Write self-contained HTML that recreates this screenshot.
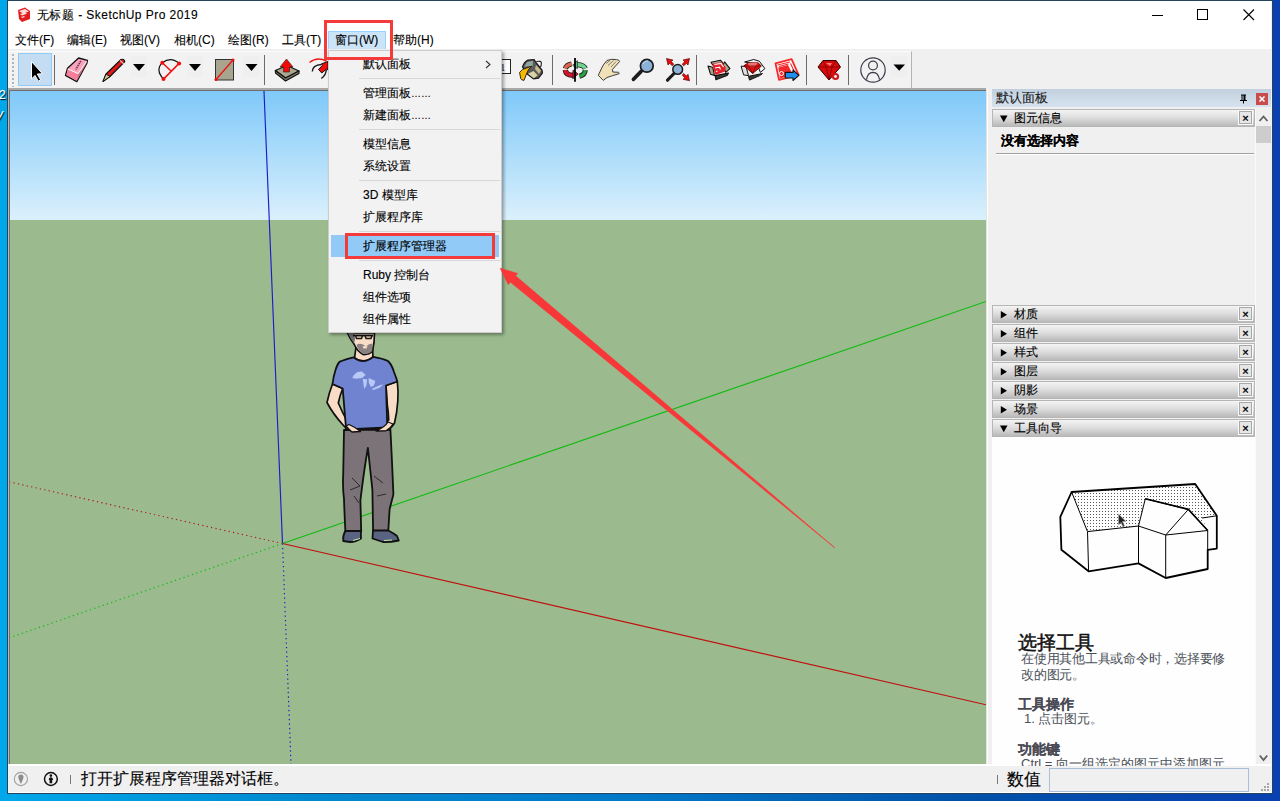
<!DOCTYPE html>
<html><head><meta charset="utf-8">
<style>
*{box-sizing:border-box;margin:0;padding:0}
html,body{width:1280px;height:801px;overflow:hidden}
body{position:relative;font-family:"Liberation Sans",sans-serif;font-size:12px;color:#000;-webkit-text-stroke-width:0.12px;
background:linear-gradient(90deg,#00a8ea 0%,#0088d0 25%,#0078c8 50%,#0052aa 75%,#0a40b0 100%)}
.a{position:absolute}
#win{left:7px;top:0;width:1266px;height:794px;border:1px solid #23435f;background:#f0f0f0}
#title{left:8px;top:1px;width:1263px;height:29px;background:#fff}
#menubar{left:8px;top:30px;width:1263px;height:19px;background:#fff}
.mi{position:absolute;top:32px;height:17px;line-height:17px;font-size:12px;white-space:nowrap}
#tbband{left:8px;top:49px;width:1263px;height:40px;background:#f0f0f0}
#tb{left:8px;top:51px;width:904px;height:37px;background:#f2f2f2;border-top:1px solid #f9fbff;border-right:1px solid #b4b4b4}
.sep{position:absolute;top:55px;width:2px;height:30px;border-left:1px solid #6a6a6a;border-right:1px solid #fff}
#vpframe{left:8px;top:88px;width:978px;height:676px;background:#6e6e6e;border-top:2px solid #a8a8a8;border-left:1px solid #b8b8b8}
#status{left:8px;top:764px;width:1263px;height:29px;background:#f0f0f0;border-top:2px solid #fff;border-bottom:1px solid #fff}
#panel{left:986px;top:89px;width:285px;height:675px;background:#f0f0f0;border-left:1px solid #e4e4e4;box-shadow:inset 1px 0 0 #fff}
.sh{position:absolute;left:992px;width:263px;height:18px;border:1px solid #b6b6b6;
background:linear-gradient(#f4f4f4,#dcdcdc 50%,#b9b9b9);font-size:12px;line-height:16px}
.sh .tri{position:absolute;left:7px;top:4.5px}
.sh .t{position:absolute;left:21px;top:0}
.sh .x{position:absolute;left:246px;top:1px;width:13px;height:13px;border:1px solid #a8a8a8;background:#e6e6e6;box-shadow:0 0 0 1px #fafafa;font-size:11px;line-height:12px;text-align:center;font-weight:normal;-webkit-text-stroke-width:0.4px}
#menu{left:328px;top:50px;width:174px;height:283px;background:#f2f2f2;border:1px solid #cccccc;box-shadow:2px 2px 3px rgba(0,0,0,.35)}
.mr{position:absolute;left:34px;height:22px;line-height:22px;font-size:12px;white-space:nowrap}
.ms{position:absolute;left:30px;width:141px;height:1px;background:#d7d7d7}
</style></head><body>
<div class="a" style="left:-1px;top:88px;font-size:12px;line-height:14px;color:#fff;text-shadow:1px 1px 1px #000">2</div>
<div class="a" style="left:-3px;top:107px;font-size:12px;line-height:14px;color:#fff;text-shadow:1px 1px 1px #000;font-style:italic">y</div>
<div class="a" id="win"></div>
<div class="a" id="title"></div>
<div class="a" style="left:37px;top:7px;font-size:12px;line-height:17px;letter-spacing:0.45px">无标题 - SketchUp Pro 2019</div>
<svg class="a" style="left:0;top:0" width="1280" height="30" viewBox="0 0 1280 30">
<path d="M18 10 L25 7.5 L30 11 L30 19 L22 22 L19 19 Z" fill="#e11d1d"/>
<path d="M19 11 L25 9 L29 11.5 L23 13.5 Z M20 14 L25 12.5 L27 13.8 L22 15.5 Z M21 17 L24 16 L25 17 L22 18 Z" fill="#fff" opacity=".85"/>
<rect x="1152" y="15" width="11" height="1" fill="#000"/>
<rect x="1197.5" y="9.5" width="10" height="10" fill="none" stroke="#000" stroke-width="1"/>
<path d="M1243.5 9.5 L1254 20 M1254 9.5 L1243.5 20" stroke="#000" stroke-width="1.1"/>
</svg>
<div class="a" id="menubar"></div>
<div class="mi" style="left:15px">文件(F)</div>
<div class="mi" style="left:67px">编辑(E)</div>
<div class="mi" style="left:120px">视图(V)</div>
<div class="mi" style="left:174px">相机(C)</div>
<div class="mi" style="left:228px">绘图(R)</div>
<div class="mi" style="left:282px">工具(T)</div>
<div class="a" style="left:328px;top:31px;width:58px;height:19px;background:#cce4f7;border:1px solid #99d1ff"></div>
<div class="mi" style="left:335px">窗口(W)</div>
<div class="mi" style="left:393px">帮助(H)</div>
<div class="a" id="tbband"></div>
<div class="a" id="tb"></div>
<svg class="a" style="left:0;top:49px" width="1280" height="40" viewBox="0 49 1280 40">
<g fill="#b4b4b4"><rect x="12" y="54" width="2" height="2"/><rect x="12" y="58" width="2" height="2"/><rect x="12" y="62" width="2" height="2"/><rect x="12" y="66" width="2" height="2"/><rect x="12" y="70" width="2" height="2"/><rect x="12" y="74" width="2" height="2"/><rect x="12" y="78" width="2" height="2"/><rect x="12" y="82" width="2" height="2"/><rect x="12" y="86" width="2" height="1"/></g>
<rect x="18.5" y="53.5" width="33" height="32" fill="#c4ddf3" stroke="#91c9f7"/>
<path d="M31.5 61.5 L31.5 79 L35 75.5 L38.3 81.2 L40.6 79.8 L37.3 74 L42.5 73.8 Z" fill="#000" stroke="#fff" stroke-width="1" stroke-linejoin="round"/>
<g stroke="#6b6b6b" stroke-width="1"><line x1="54.5" y1="55" x2="54.5" y2="85"/><line x1="264.5" y1="55" x2="264.5" y2="85"/><line x1="552.5" y1="55" x2="552.5" y2="85"/><line x1="696.5" y1="55" x2="696.5" y2="85"/><line x1="806.5" y1="55" x2="806.5" y2="85"/><line x1="848.5" y1="55" x2="848.5" y2="85"/></g>
<!-- eraser -->
<path d="M67.5 68.2 L78.6 58 L87.5 60.3 L86.8 63.5 L76.8 81.6 L65.5 75.4 Z" fill="#f9a3bd" stroke="#111" stroke-width="1.3" stroke-linejoin="round"/>
<path d="M67.8 69 L78.2 73.6 L76.5 80.8 L66.3 75 Z" fill="#f87f9b"/>
<path d="M78.2 73.6 L86.5 62 L86.2 63.8 L77 80.5 Z" fill="#d07088"/>
<path d="M67.8 69 L78.2 73.6 L86.6 61.2" fill="none" stroke="#fff" stroke-width="1"/>
<path d="M80.8 61 L75.8 69.5" stroke="#6a3a48" stroke-width="1.6" stroke-dasharray="1.5 .8"/>
<!-- pencil -->
<path d="M103 81.5 L106 74 L121 59.5 Q124 58.5 124.8 61.5 L110 76.5 Z" fill="#e01818" stroke="#111" stroke-width="1.1" stroke-linejoin="round"/>
<path d="M103 81.5 L106 74 L110 76.5 Z" fill="#d8c890" stroke="#111" stroke-width="1"/>
<path d="M120 60.5 L124 64" stroke="#f0b0b0" stroke-width="1.2"/>
<!-- dropdown arrows -->
<g fill="#efefef"><rect x="131" y="56" width="16" height="21"/><rect x="187" y="56" width="16" height="21"/><rect x="243" y="56" width="16" height="21"/><rect x="891" y="56" width="16" height="21"/></g>
<g fill="#000"><path d="M133 64 L145 64 L139 71 Z"/><path d="M189 64 L201 64 L195 71 Z"/><path d="M245.5 64 L257.5 64 L251.5 71 Z"/><path d="M893.5 64.5 L905 64.5 L899.2 70.8 Z"/></g>
<!-- arc -->
<path d="M163.5 79.1 Q155 70 162.3 62.7 Q171 56 179.1 63.4" fill="none" stroke="#111" stroke-width="1.2"/>
<g stroke="#f01010" stroke-width="1.5"><line x1="162.3" y1="62.7" x2="171" y2="71"/><line x1="179.1" y1="63.4" x2="163.5" y2="79.1"/></g>
<g fill="#f01010"><circle cx="162.3" cy="62.7" r="2"/><circle cx="179.1" cy="63.4" r="2"/><circle cx="163.5" cy="79.1" r="2"/></g>
<!-- rectangle -->
<rect x="215.5" y="59.5" width="18" height="20.5" fill="#a8a58f" stroke="#333" stroke-width="1"/>
<line x1="216" y1="79.5" x2="233" y2="60" stroke="#f01010" stroke-width="1.3"/>
<circle cx="216" cy="79.5" r="1.6" fill="#f01010"/><circle cx="233" cy="60" r="1.6" fill="#f01010"/>
<!-- push pull -->
<path d="M275.3 70.5 L287 65.5 L299 71 L285.5 78 Z" fill="#aaa690" stroke="#111" stroke-width="1.2" stroke-linejoin="round"/>
<path d="M275.3 70.5 L275.5 73 L285.5 81 L299 73.5 L299 71 L285.5 78 Z" fill="#7d7a68" stroke="#111" stroke-width="1.1" stroke-linejoin="round"/>
<path d="M286.5 59 L293 67 L289.5 67 L289.5 72 L283.5 72 L283.5 67 L280 67 Z" fill="#f00a0a" stroke="#222" stroke-width=".6"/>
<!-- follow me partial -->
<path d="M309.5 62.5 Q317 56.5 326.5 61" fill="none" stroke="#f01818" stroke-width="1.4"/>
<path d="M312.3 71.5 Q312.5 65 321.5 64.5" fill="none" stroke="#1a1a1a" stroke-width="1.4"/>
<path d="M321.3 78.5 Q326 75.5 326.3 69.5" fill="none" stroke="#1a1a1a" stroke-width="1.4"/>
<path d="M318.5 69.5 L322.5 65.3 L321.5 63.8 L328 61.5 L328 70 L326.5 69 L321.8 73 Z" fill="#f00a0a" stroke="#111" stroke-width="1" stroke-linejoin="round"/>
<!-- A1 text box -->
<rect x="496.5" y="59.5" width="14" height="14" fill="#fff" stroke="#222" stroke-width="1"/>
<text x="500" y="71" font-family="Liberation Serif" font-size="11" fill="#222">1</text>
<!-- paint bucket -->
<path d="M536.3 61.5 Q541.5 60.5 541.4 63 Q541.5 66 540.3 67" fill="none" stroke="#222" stroke-width="1.1"/>
<path d="M522.5 67 Q524 62 528 60.1 L534.1 59.7 L536.3 63 L542.1 70.2 L542.4 73.1 L538.5 78.2 L533.4 78.9 L526.9 73.8 Z" fill="#5a5a5a" stroke="#1a1a1a" stroke-width="1.2" stroke-linejoin="round"/>
<path d="M524.3 66.6 L527.2 61.9 L533 60.8 L532.7 65.9 Z" fill="#90a8a2"/>
<path d="M536 65 L541 70.5 L539 74 L535 69 Z" fill="#c8bc8c"/>
<path d="M528 73.8 L533.4 70.9 L537.7 75.3 L533.8 78.2 Z" fill="#ddd3a2"/>
<path d="M522.5 69.5 L531.6 66.2 Q528 69 526.9 73.1 L524 80.4 Q521 80 520.7 78.6 L519.6 72.4 Z" fill="#f6b800" stroke="#1a1a1a" stroke-width=".9" stroke-linejoin="round"/>
<!-- orbit -->
<g fill="none" stroke-linecap="butt">
<path d="M565.3 68.5 Q566.5 64.8 571.5 64" stroke="#222" stroke-width="5.2"/>
<path d="M565.3 68.5 Q566.5 64.8 571.5 64" stroke="#e0644c" stroke-width="3.4"/>
<path d="M585.2 68.5 Q584 65 577 64.6" stroke="#222" stroke-width="5.4"/>
<path d="M585.2 68.5 Q584 65 577 64.6" stroke="#72d292" stroke-width="3.6"/>
<path d="M565.3 70 Q566 75.5 573.5 75.2" stroke="#222" stroke-width="5.4"/>
<path d="M565.3 70 Q566 75.5 573.5 75.2" stroke="#d8142a" stroke-width="3.6"/>
<path d="M585.3 70 Q585 75 579.5 76.2" stroke="#222" stroke-width="5"/>
<path d="M585.3 70 Q585 75 579.5 76.2" stroke="#2aa244" stroke-width="3.2"/>
</g>
<path d="M573 70 L578.2 74 L572.8 78.8 Z" fill="#d8142a" stroke="#222" stroke-width=".8" stroke-linejoin="round"/>
<path d="M577.3 60.6 L572.6 65.3 L577.3 68.6 Z" fill="#72d292" stroke="#222" stroke-width=".8" stroke-linejoin="round"/>
<line x1="575" y1="58" x2="575" y2="81.8" stroke="#000" stroke-width="1.8"/>
<!-- pan hand -->
<path d="M598.3 75.3 L603.3 80.4 L607 77.5 L612.4 75.7 L618.9 73.8 Q620 73 618.5 72.3 L612.8 72 L612.4 69.5 L619.6 61.5 Q619 59.5 616.7 59.7 L611.7 59.3 L607 60.4 L604 64 L602.2 67 Z" fill="#f1e1b9" stroke="#2a2a2a" stroke-width=".9" stroke-linejoin="round"/>
<path d="M606 63.5 L610 60.5 M608 65.5 L613.5 60.5 M611 67 L616 61.5" fill="none" stroke="#555" stroke-width=".7"/>
<!-- zoom -->
<line x1="641" y1="71.5" x2="633.5" y2="79.3" stroke="#1c1c1c" stroke-width="3.8" stroke-linecap="round"/>
<circle cx="646.8" cy="65.8" r="6.4" fill="#8db2d8" stroke="#1c1c1c" stroke-width="1.7"/>
<path d="M643 64 Q644.5 61 648 60.8" fill="none" stroke="#b8dcf8" stroke-width="1"/>
<!-- zoom extents -->
<line x1="674" y1="73.5" x2="667.5" y2="80.2" stroke="#1c1c1c" stroke-width="3.2" stroke-linecap="round"/>
<circle cx="677.7" cy="69.4" r="4.9" fill="#8db2d8" stroke="#1c1c1c" stroke-width="1.5"/>
<g fill="#f00a0a" stroke="#300" stroke-width=".6" stroke-linejoin="round"><path d="M666.5 58.5 L673 60 L671.3 61.6 L673.8 64.2 L672.2 65.8 L669.6 63.2 L668 65 Z"/><path d="M689.5 58.5 L688 65 L686.4 63.3 L683.8 65.8 L682.2 64.2 L684.8 61.6 L683 60 Z"/><path d="M689.5 80.8 L683 79.3 L684.7 77.7 L682.2 75.1 L683.8 73.5 L686.4 76.1 L688 74.3 Z"/></g>
<!-- warehouse -->
<g stroke="#111" stroke-width="1.1" stroke-linejoin="round">
<path d="M708 66 L712.7 67.2 L714.5 75.6 L710.5 74.2 Z" fill="#a8a890"/>
<path d="M724.6 61.9 L729.9 68.6 L725.7 72.4 L723 65 Z" fill="#a8a890"/>
<path d="M711 62.3 L720.4 60.2 L722.9 63 L712.7 65 Z" fill="#a8a890"/>
<path d="M715.2 75.6 L728.5 73.1 L727 75.6 L715.9 79.8 Z" fill="#3a3a30"/>
</g>
<path d="M712.7 63.7 L721.8 62 L725.7 67.5 L725 71.4 L715.5 74.9 L713.4 68.6 Z" fill="#e8202a"/>
<path d="M714.5 64.5 L721 63.5 L723.5 67 M715 68 L719.5 67.2 L720.5 69.5 M716 71.5 L717.5 71" fill="none" stroke="#fff" stroke-width="1.2"/>
<!-- ext warehouse -->
<g stroke="#111" stroke-width="1" stroke-linejoin="round">
<path d="M741.1 66.1 L746 66.5 L748.5 75.6 L743.6 74.9 Z" fill="#e0e0e0"/>
<path d="M744.6 62 L753.7 59.5 L759.3 61.2 L764.9 68.6 L760.4 72.4 L757 64 Z" fill="#f4f4f4"/>
<path d="M748.5 76.3 L762.5 73.5 L759.7 75.6 L749.5 80.1 Z" fill="#3a3a30"/>
</g>
<path d="M743.9 65.8 L747.8 63 L757.9 62.6 L761.4 66.1 L752.7 73.5 Z" fill="#e01010" stroke="#400" stroke-width=".8" stroke-linejoin="round"/>
<path d="M747.8 63 L757.9 62.6 L755.5 66.5 L749 66.5 Z" fill="#f07070"/>
<path d="M744 66 L761 66 M749 66.5 L752.7 73.5 L755.5 66.5" fill="none" stroke="#600" stroke-width=".7"/>
<!-- share -->
<path d="M775.5 63.3 L791.6 59.1 L798.6 74.9 L779 79.8 Z" fill="#fff" stroke="#f42a2a" stroke-width="1.8" stroke-linejoin="round"/>
<path d="M778.3 67.5 L788 65 L793 75 L780 78.5 Z" fill="#f42a2a"/>
<path d="M777.5 65 L790 62 M779 66.5 L788.5 64 M790.5 63.5 L795 73" fill="none" stroke="#f42a2a" stroke-width="1.1"/>
<circle cx="781.5" cy="73.5" r="2" fill="none" stroke="#fff" stroke-width="1"/>
<path d="M785.3 72.4 L793 72.4 L793 70 L798.9 75.4 L793 80.5 L793 78 L785.3 78 Z" fill="#1e90f0" stroke="#111" stroke-width="1.1" stroke-linejoin="round"/>
<!-- ruby -->
<path d="M818 67 L823 60.5 L836 60.5 L840.5 67 L829 80 Z" fill="#d60c0c" stroke="#300" stroke-width="1"/>
<path d="M818.5 67 L840 67 M823 60.5 L826 67 L829 80 M836 60.5 L832 67 L829 80" fill="none" stroke="#700" stroke-width=".7"/>
<path d="M826 63 L832 63 L830 66 Z" fill="#f77"/>
<circle cx="835.5" cy="76.5" r="3.6" fill="#d01818"/><circle cx="835.5" cy="76.5" r="1.4" fill="#f2f2f2"/>
<!-- profile -->
<circle cx="873" cy="70" r="12.2" fill="none" stroke="#3c3c4c" stroke-width="1.2"/>
<circle cx="873" cy="65.5" r="4.4" fill="none" stroke="#3c3c4c" stroke-width="1.2"/>
<path d="M866.5 79.7 Q867.5 72.5 873 72.3 Q878.5 72.5 879.5 79.7" fill="none" stroke="#3c3c4c" stroke-width="1.2"/>
</svg>

<div class="a" id="vpframe"></div>
<svg class="a" style="left:10px;top:91px" width="976" height="673" viewBox="10 91 976 673">
<defs><linearGradient id="sky" x1="0" y1="0" x2="0" y2="1"><stop offset="0" stop-color="#7fc9f9"/><stop offset="1" stop-color="#dbf0fc"/></linearGradient></defs>
<rect x="10" y="91" width="976" height="129" fill="url(#sky)"/>
<rect x="10" y="220" width="976" height="544" fill="#9bbb8f"/>
<line x1="282.5" y1="543.5" x2="264" y2="91" stroke="#1c1ccc" stroke-width="1.15"/>
<line x1="282.5" y1="543.5" x2="986" y2="301.5" stroke="#12bb12" stroke-width="1.15"/>
<line x1="282.5" y1="543.5" x2="986" y2="704.8" stroke="#c01010" stroke-width="1.15"/>
<line x1="282.5" y1="543.5" x2="291" y2="764" stroke="#1c1ccc" stroke-width="1.2" stroke-dasharray="1.3 3.2"/>
<line x1="282.5" y1="543.5" x2="10" y2="482" stroke="#b02020" stroke-width="1.2" stroke-dasharray="1.3 3.2"/>
<line x1="282.5" y1="543.5" x2="10" y2="637.5" stroke="#12bb12" stroke-width="1.2" stroke-dasharray="1.3 3.2"/>
<g stroke="#111" stroke-width="1.7" stroke-linejoin="round" stroke-linecap="round">
<!-- left arm -->
<path d="M332.5 384 Q329 393 327 402.5 Q333 414 343.5 425.5 Q347 430 351.5 432 L361 431.5 Q356 426.5 348 422.5 Q342 412 338.3 403 Q340 395 342.7 388.5 Z" fill="#f9dcc5"/>
<!-- right arm -->
<path d="M397.3 381.5 Q398.5 391 397.8 401 Q397 413 394.5 423 Q391 429 386 430.8 L375 431.2 Q381 426.5 388.7 420 Q388.5 412 387.3 405 L386 385.5 Z" fill="#f9dcc5"/>
<!-- neck -->
<path d="M356 347 L354.5 358.5 Q363 365 373 357.5 L372.5 347 Z" fill="#f9dcc5"/>
<!-- head -->
<path d="M347.5 333 Q350 339 354 344 Q357 351 363 354.5 Q369 355 372.5 351 Q374.5 343 374.5 333 Z" fill="#f9dcc5"/>
</g>
<path d="M356.5 345 Q359 343 363 344.5 L366 346.5 Q369 343.5 372.3 343.5 L372.2 351 Q369 354.5 363.5 354 Q358.5 351.5 356.5 345 Z" fill="#8a8282"/>
<path d="M362.5 346.5 Q365 345.5 367.5 346.5 L366.5 348.5 L363.5 348.5 Z" fill="#f9dcc5"/>
<path d="M348 333 Q350.5 338.5 354 343.5 L355 339 L354 333 Z" fill="#6b6b6b"/>
<path d="M353 335.5 L373 335.5" stroke="#111" stroke-width="1.8"/>
<path d="M355.5 335.5 L356.5 338.5 L361.5 338.5 L362.5 335.5 M365 335.5 L366 338.5 L371 338.5 L372 335.5" fill="none" stroke="#1a1a1a" stroke-width="1.5"/>
<g stroke="#111" stroke-width="1.8" stroke-linejoin="round" stroke-linecap="round">
<!-- shirt -->
<path d="M353.5 357.3 Q363.4 365 373.2 356.8 Q383 358.5 388 361 Q392 365 394 372 Q396 377 397.3 381.5 L386 385.5 L387.3 427.5 L346.1 429.3 L342.7 388.5 L332.5 384 Q333.5 376 335.5 370 Q337.5 363.5 340 361.5 Q347 358.5 353.5 357.3 Z" fill="#6f83d1"/>
<!-- pants -->
<path d="M344 430 L390.4 429.5 Q392 460 393.4 494.4 L389.6 509.3 L388.3 531 L373.1 531.8 L372.4 489.9 L367.9 448 Q364 470 360.4 500.4 L361.2 531.8 L345.4 531.8 Q344.5 515 344 498.9 Q342.5 487 343.2 475 Z" fill="#7b7377"/>
<!-- shoes -->
<path d="M345.3 531 L360.8 531 L361 538.5 Q356 542 350 542 L343.3 541 Q342.5 536 345.3 531 Z" fill="#5a6382"/>
<path d="M373 530.5 L388.3 530.5 Q394 533.5 397 536 L398.8 540.5 Q390 542.3 383 542 L372.5 538.5 Z" fill="#5a6382"/>
</g>
<!-- hands over pants -->
<path d="M346 426 Q350 430.5 352 432 L360.5 431.5 Q356 427.5 349 424.5 Z" fill="#f9dcc5" stroke="#111" stroke-width="1.3" stroke-linejoin="round"/>
<path d="M388 422 Q385 427 376 431 L386 430.8 Q391 428 393 424 Z" fill="#f9dcc5" stroke="#111" stroke-width="1.3" stroke-linejoin="round"/>
<!-- lakes logo -->
<path d="M352.2 377.9 Q354 374 357.4 371.9 L361.9 371.5 L365.7 374.9 L361.9 377.9 L355.9 378.7 Z M362.7 378.7 L364.2 389.1 L366.4 385.4 L367.2 379.4 Z M368.7 377.9 L375.4 380.9 L373.9 385.4 L370.9 386.9 L368.7 382.4 Z M371.5 389 L379 385.5 L383.5 384.3 L380 387.5 L373.5 390 Z" fill="#b9c9f5"/>
<!-- pants folds -->
<path d="M352 478 L360 486 L350 490 M354 496 L359 503 M374 476 L383 483 M377 496 L386 494" stroke="#222" stroke-width=".9" fill="none"/>
<path d="M353 540.5 L360 538.5 M384 540.5 L392 540" stroke="#b8e8a0" stroke-width="1.1"/>

</svg>
<div class="a" id="status"></div>
<svg class="a" style="left:12px;top:771px" width="50" height="16" viewBox="12 771 50 16">
<circle cx="20.9" cy="779" r="6.6" fill="none" stroke="#a0a0a0" stroke-width="1.1"/>
<path d="M20.9 774.5 Q23.5 774.5 23.5 777 Q23.5 779 21.6 782.5 L20.9 784 L20.2 782.5 Q18.3 779 18.3 777 Q18.3 774.5 20.9 774.5 Z" fill="#8c8c8c"/>
<circle cx="50.9" cy="779" r="6.4" fill="none" stroke="#111" stroke-width="1.5"/>
<circle cx="50.9" cy="775.6" r="1.3" fill="#111"/>
<path d="M48.8 780 Q48.8 777.3 50.9 777.3 Q53 777.3 53 780 L52.2 780 L52.2 783.3 L49.6 783.3 L49.6 780 Z" fill="#111"/>
</svg>
<div class="a" style="left:70px;top:775px;width:1px;height:9px;background:#777"></div>
<div class="a" style="left:81px;top:769px;font-size:16px;line-height:20px;white-space:nowrap;-webkit-text-stroke-width:0.1px">打开扩展程序管理器对话框。</div>
<div class="a" style="left:997px;top:775px;width:1px;height:9px;background:#777"></div>
<div class="a" style="left:1007px;top:769px;font-size:16.5px;line-height:20px;white-space:nowrap">数值</div>
<div class="a" style="left:1049px;top:768px;width:200px;height:24px;border:1px solid #a9bedb;background:#f0f0f0"></div>
<svg class="a" style="left:1260px;top:782px" width="10" height="10" viewBox="0 0 10 10"><g fill="#a8a8a8"><rect x="7" y="1" width="2" height="2"/><rect x="4" y="4" width="2" height="2"/><rect x="7" y="4" width="2" height="2"/><rect x="1" y="7" width="2" height="2"/><rect x="4" y="7" width="2" height="2"/><rect x="7" y="7" width="2" height="2"/></g></svg>
<div class="a" id="panel"></div>
<div class="a" style="left:992px;top:89px;width:279px;height:18px;background:linear-gradient(#c2d0df,#d6e2ee)"></div>
<div class="a" style="left:996px;top:89px;line-height:18px;font-size:13px;color:#1a1a1a">默认面板</div>
<svg class="a" style="left:1239px;top:94px" width="9" height="10" viewBox="0 0 9 10"><path d="M2 0.5 H7 V1.5 H6.5 V6 H8 V7 H5 V9.5 H4 V7 H1 V6 H2.5 V1.5 H2 Z" fill="#000"/><rect x="3.5" y="1.5" width="1" height="4.5" fill="#c6d3e1"/></svg>
<div class="a" style="left:1256px;top:93px;width:12px;height:12px;background:#c94c4c"></div>
<svg class="a" style="left:1256px;top:93px" width="12" height="12" viewBox="0 0 12 12"><path d="M3.5 3.5 L8.5 8.5 M8.5 3.5 L3.5 8.5" stroke="#fff" stroke-width="1.6"/></svg>
<div class="sh" style="top:109px"><svg class="tri" width="8" height="8" viewBox="0 0 8 8"><path d="M0 0.5 L7.5 0.5 L3.75 7.3 Z" fill="#000"/></svg><span class="t">图元信息</span><span class="x">×</span></div>
<div class="a" style="left:1001px;top:132px;font-size:13px;font-weight:bold;line-height:18px">没有选择内容</div>
<div class="a" style="left:996px;top:153px;width:258px;height:2px;background:#a0a0a0;border-bottom:1px solid #fff"></div>
<div class="a" style="left:1255px;top:109px;width:1px;height:656px;background:#fafafa"></div>
<svg class="a" style="left:1256px;top:110px" width="15" height="655" viewBox="0 0 15 655"><path d="M3.5 11 L7.5 6.5 L11.5 11" fill="none" stroke="#606060" stroke-width="1.8"/><rect x="0" y="16" width="15" height="17" fill="#cdcdcd"/><path d="M3.8 645.5 L7.5 650 L11.2 645.5" fill="none" stroke="#606060" stroke-width="1.8"/></svg>
<div class="sh" style="top:305px"><svg class="tri" width="8" height="8" viewBox="0 0 8 8"><path d="M0.8 0 L7 3.75 L0.8 7.5 Z" fill="#000"/></svg><span class="t">材质</span><span class="x">×</span></div>
<div class="sh" style="top:324px"><svg class="tri" width="8" height="8" viewBox="0 0 8 8"><path d="M0.8 0 L7 3.75 L0.8 7.5 Z" fill="#000"/></svg><span class="t">组件</span><span class="x">×</span></div>
<div class="sh" style="top:343px"><svg class="tri" width="8" height="8" viewBox="0 0 8 8"><path d="M0.8 0 L7 3.75 L0.8 7.5 Z" fill="#000"/></svg><span class="t">样式</span><span class="x">×</span></div>
<div class="sh" style="top:362px"><svg class="tri" width="8" height="8" viewBox="0 0 8 8"><path d="M0.8 0 L7 3.75 L0.8 7.5 Z" fill="#000"/></svg><span class="t">图层</span><span class="x">×</span></div>
<div class="sh" style="top:381px"><svg class="tri" width="8" height="8" viewBox="0 0 8 8"><path d="M0.8 0 L7 3.75 L0.8 7.5 Z" fill="#000"/></svg><span class="t">阴影</span><span class="x">×</span></div>
<div class="sh" style="top:400px"><svg class="tri" width="8" height="8" viewBox="0 0 8 8"><path d="M0.8 0 L7 3.75 L0.8 7.5 Z" fill="#000"/></svg><span class="t">场景</span><span class="x">×</span></div>
<div class="sh" style="top:419px"><svg class="tri" width="8" height="8" viewBox="0 0 8 8"><path d="M0 0.5 L7.5 0.5 L3.75 7.3 Z" fill="#000"/></svg><span class="t">工具向导</span><span class="x">×</span></div>
<div class="a" style="left:992px;top:437px;width:263px;height:329px;background:#fefefe;overflow:hidden">
<svg class="a" style="left:0;top:0" width="263" height="329" viewBox="992 437 263 329">
<defs><pattern id="dots" width="3" height="3" patternUnits="userSpaceOnUse"><rect x="1" y="1" width="1" height="1" fill="#555"/></pattern></defs>
<path d="M1071.6 492 L1195.2 484 L1216.8 515.8 L1202 518 L1207.7 530.5 L1188.4 509.4 L1145.3 498.8 L1138.5 526 L1087.5 531.6 Z" fill="url(#dots)"/>
<g fill="none" stroke="#000" stroke-linejoin="round">
<path d="M1071.6 492 L1195.2 484 L1216.8 515.8 L1216.8 548.6 L1207.7 549.8 L1207.7 569 L1165.7 578 L1138.5 563.4 L1088.6 571.3 L1061.4 549.8 L1060.3 516.9 Z" stroke-width="1.8"/>
<path d="M1071.6 492 L1087.5 531.6 L1088.6 571.3 M1087.5 531.6 L1138.5 526 L1138.5 563.4 M1138.5 526 L1145.3 498.8 L1188.4 509.4 L1207.7 530.5 L1207.7 549.8 M1138.5 526 L1165.7 535 L1165.7 578 M1165.7 535 L1207.7 530.5 M1165.7 535 L1188.4 509.4 M1202 518 L1216.8 515.8" stroke-width="1"/>
<path d="M1145.3 498.8 L1188.4 509.4 L1207.7 530.5" stroke-width="1.6"/>
</g>
<path d="M1118.5 514 L1118.5 525 L1121 522.5 L1123 527 L1124.5 526 L1122.5 521.5 L1126 521.5 Z" fill="#222" stroke="#aaa" stroke-width=".6"/>
</svg>
<div class="a" style="left:26px;top:195px;font-family:'Liberation Serif',serif;font-size:19px;line-height:22px;font-weight:normal;-webkit-text-stroke-width:0.5px;color:#111;white-space:nowrap">选择工具</div>
<div class="a" style="left:29px;top:214px;width:206px;font-size:13px;line-height:16px;color:#4a4f57;letter-spacing:-0.25px;-webkit-text-stroke-width:0">在使用其他工具或命令时，选择要修改的图元。</div>
<div class="a" style="left:26px;top:258px;font-size:14px;line-height:18px;font-weight:bold;color:#4a4a55;white-space:nowrap">工具操作</div>
<div class="a" style="left:32px;top:274px;font-size:13px;line-height:16px;color:#4a4f57;-webkit-text-stroke-width:0;white-space:nowrap">1. 点击图元。</div>
<div class="a" style="left:26px;top:303px;font-size:14px;line-height:18px;font-weight:bold;color:#4a4a55;white-space:nowrap">功能键</div>
<div class="a" style="left:29px;top:319px;font-size:13px;line-height:16px;color:#4a4f57;-webkit-text-stroke-width:0;white-space:nowrap">Ctrl = 向一组选定的图元中添加图元</div>
</div>
<div class="a" id="menu">
<div class="mr" style="top:2px">默认面板</div>
<svg class="a" style="left:156px;top:9px" width="6" height="9" viewBox="0 0 6 9"><path d="M1 1 L5 4.5 L1 8" fill="none" stroke="#333" stroke-width="1.1"/></svg>
<div class="ms" style="top:27px"></div>
<div class="mr" style="top:31px">管理面板<span style="font-size:10px">……</span></div>
<div class="mr" style="top:53px">新建面板<span style="font-size:10px">……</span></div>
<div class="ms" style="top:78px"></div>
<div class="mr" style="top:82px">模型信息</div>
<div class="mr" style="top:104px">系统设置</div>
<div class="ms" style="top:129px"></div>
<div class="mr" style="top:133px">3D 模型库</div>
<div class="mr" style="top:155px">扩展程序库</div>
<div class="ms" style="top:180px"></div>
<div class="a" style="left:2px;top:184px;width:168px;height:22px;background:#91c9f7"></div>
<div class="mr" style="top:184px">扩展程序管理器</div>
<div class="ms" style="top:209px"></div>
<div class="mr" style="top:213px">Ruby 控制台</div>
<div class="mr" style="top:235px">组件选项</div>
<div class="mr" style="top:257px">组件属性</div>
</div>
<div class="a" style="left:324px;top:20px;width:69px;height:40px;border:3px solid #f43a3a"></div>
<div class="a" style="left:345px;top:233px;width:150px;height:26px;border:3px solid #f43a3a"></div>
<svg class="a" style="left:0;top:0" width="1280" height="801" viewBox="0 0 1280 801">
<path d="M500.2 268.3 L517.7 273.5 L515.6 275.8 L835 548 L510.5 282.2 L508.1 284.5 Z" fill="#f83838" stroke="#f83838" stroke-width=".6" stroke-linejoin="round"/>
</svg>
</body></html>
